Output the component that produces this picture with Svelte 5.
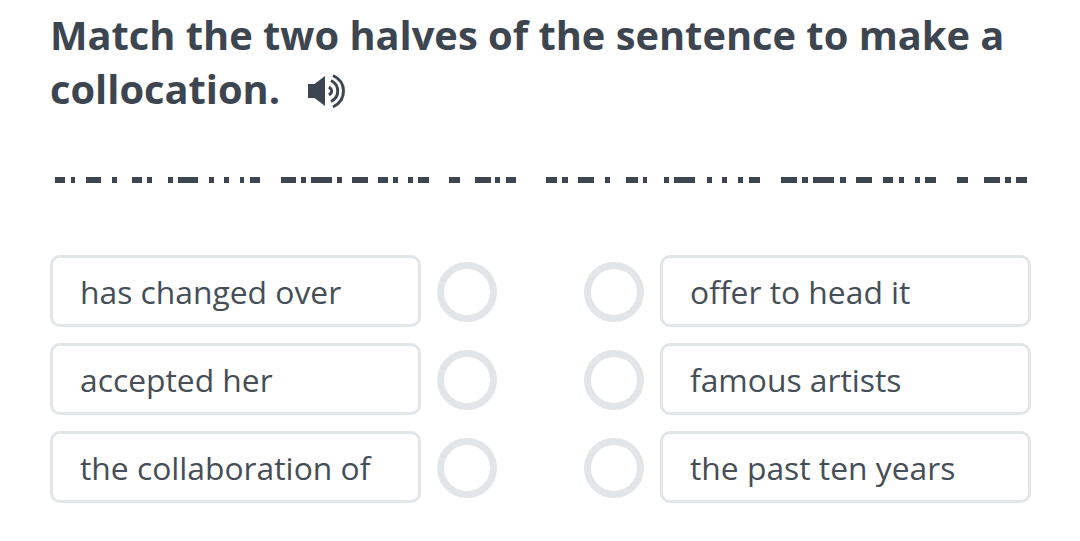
<script>
	const left = ['has changed over', 'accepted her', 'the collaboration of'];
	const right = ['offer to head it', 'famous artists', 'the past ten years'];

	// [start, end] of each dash in the masked line
	const dashes = [
		[55, 65], [71, 75], [86, 101], [112, 117], [132, 142], [147, 152], [168, 173], [178, 198],
		[209, 214], [224, 229], [240, 244], [250, 260], [281, 296], [301, 306], [311, 332], [337, 342],
		[352, 368], [378, 388], [393, 398], [408, 413], [418, 429], [449, 460], [475, 491], [495, 500],
		[506, 516], [546, 557], [562, 568], [578, 594], [605, 610], [626, 638], [643, 647], [664, 669],
		[674, 695], [707, 712], [722, 727], [738, 743], [749, 760], [781, 797], [802, 808], [813, 834],
		[840, 846], [856, 872], [883, 893], [899, 904], [915, 920], [925, 936], [957, 968], [984, 1000],
		[1005, 1011], [1016, 1027]
	];
</script>

<main class="page">
	<h1>
		Match the two halves of the sentence to make a collocation.
		<svg class="speaker" viewBox="0 0 38 36" aria-hidden="true">
			<path class="cone" d="M0 10h6.500L17 2v30L6.500 24H0z" />
			<path class="wave" d="M21 13Q26.500 17 21 21" />
			<path class="wave" d="M23 6.500C32 11 32 23 23 27.500" />
			<path class="wave" d="M25 1.500C39 8 39 26 25 33" />
		</svg>
	</h1>

	<svg class="masked" viewBox="0 0 1080 6" width="1080" height="6" aria-hidden="true">
		{#each dashes as [a, b]}
			<rect x={a} y="0" width={b - a} height="6" />
		{/each}
	</svg>

	<div class="columns">
		<div class="column">
			{#each left as text}
				<div class="row">
					<div class="card">{text}</div>
					<span class="dot"></span>
				</div>
			{/each}
		</div>
		<div class="column">
			{#each right as text}
				<div class="row">
					<span class="dot"></span>
					<div class="card">{text}</div>
				</div>
			{/each}
		</div>
	</div>
</main>

<style>
	:global(body) {
		margin: 0;
		background: #fff;
	}

	.page {
		width: 1080px;
		height: 541px;
		overflow: hidden;
		font-family: 'Open Sans', sans-serif;
		color: #3d4650;
	}

	h1 {
		margin: 0;
		padding: 8px 50px 0;
		font-size: 39.800px;
		line-height: 54px;
		font-weight: 700;
		color: #3d4650;
	}

	.speaker {
		width: 38px;
		height: 36px;
		margin-left: 18px;
		vertical-align: -6px;
	}

	.cone {
		fill: #3d4650;
	}

	.wave {
		fill: none;
		stroke: #3d4650;
		stroke-width: 3;
	}

	.masked {
		display: block;
		margin-top: 61px;
		fill: #3d4650;
	}

	.columns {
		display: flex;
		justify-content: space-between;
		margin-top: 72px;
		padding: 0 49px 0 50px;
	}

	.column {
		display: flex;
		flex-direction: column;
		gap: 16px;
	}

	.row {
		display: flex;
		align-items: center;
		gap: 16px;
	}

	.card {
		box-sizing: border-box;
		width: 371px;
		height: 72px;
		padding: 0 27px;
		border: 3px solid #e2e6e9;
		border-radius: 10px;
		font-size: 31.800px;
		line-height: 68px;
		color: #464e57;
	}

	.dot {
		box-sizing: border-box;
		width: 60px;
		height: 60px;
		margin-top: 1px;
		border: 7px solid #e2e6e9;
		border-radius: 50%;
	}
</style>
